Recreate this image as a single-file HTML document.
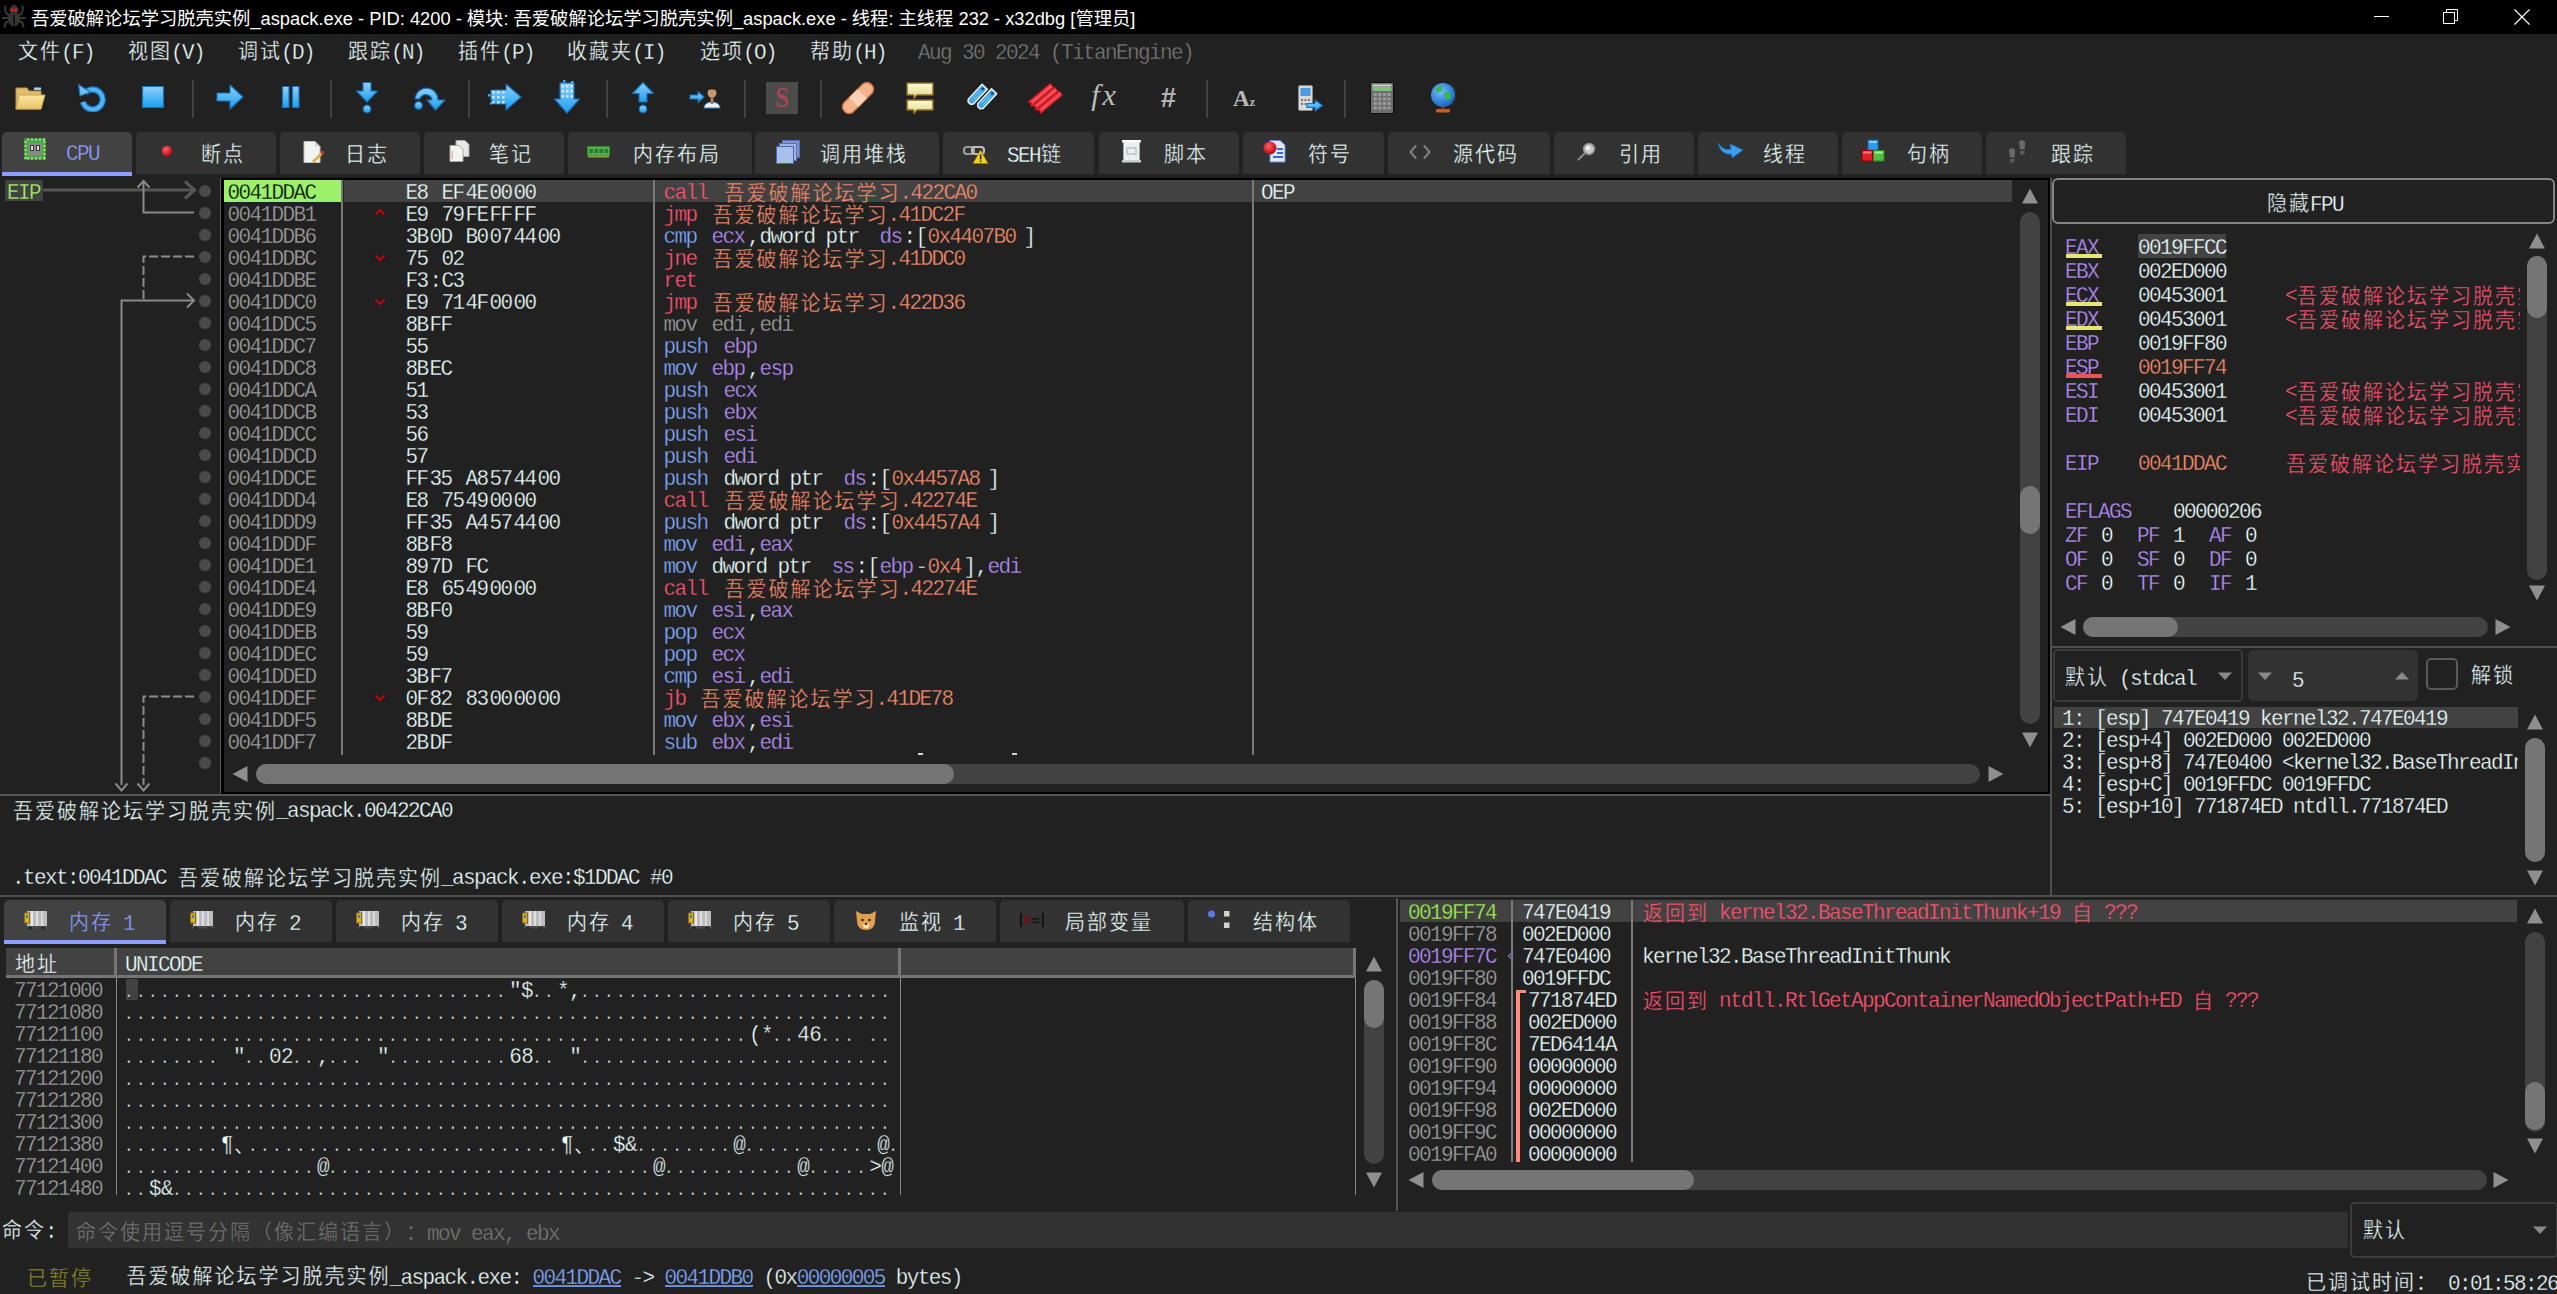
<!DOCTYPE html>
<html lang="zh-CN"><head><meta charset="utf-8"><title>x32dbg</title>
<style>
html,body{margin:0;padding:0;background:#212121;}
body{text-spacing-trim:space-all;width:2557px;height:1294px;position:relative;overflow:hidden;font-family:"Liberation Mono","Noto Sans CJK SC",monospace;font-size:21px;letter-spacing:-1.6px;color:#eeffff;}
body div,body svg{position:absolute;}
.t{white-space:pre;font-size:21px;-webkit-text-stroke:0.3px var(--bg,#212121);paint-order:fill stroke;transform:scaleY(1.045);transform-origin:50% 50%;margin-top:3px;}
.c{font-size:20px;letter-spacing:2px;position:relative;top:0.5px;left:1px;font-family:"Liberation Mono","Noto Sans CJK SC",monospace;}
.u .c{top:-1px;}
.ti{white-space:pre;font-family:"Liberation Sans","Noto Sans CJK SC",sans-serif;font-size:18.3px;letter-spacing:0;transform:none;margin-top:0;}
.ti .c{font-size:18.3px;letter-spacing:0;top:0;left:0;font-family:"Liberation Sans","Noto Sans CJK SC",sans-serif;}
.k{display:inline-block;white-space:pre;vertical-align:top;}
.d{letter-spacing:-0.6px;}
.dd{font-size:16px;letter-spacing:2.4px;position:relative;left:-1px;}
.ic{letter-spacing:0;white-space:pre;text-align:center;}
</style></head>
<body>
<svg width="0" height="0" style="position:absolute"><defs>
<linearGradient id="gb" x1="0" y1="0" x2="0" y2="1"><stop offset="0" stop-color="#8fd0f8"/><stop offset="1" stop-color="#1c9ff0"/></linearGradient>
<linearGradient id="gy" x1="0" y1="0" x2="0" y2="1"><stop offset="0" stop-color="#fbe6a2"/><stop offset="1" stop-color="#e8c46a"/></linearGradient>
<linearGradient id="gc" x1="0" y1="0" x2="0" y2="1"><stop offset="0" stop-color="#fdfbe0"/><stop offset="1" stop-color="#e2d680"/></linearGradient>
<radialGradient id="gg" cx="0.4" cy="0.35" r="0.7"><stop offset="0" stop-color="#6fc0ff"/><stop offset="1" stop-color="#1560c0"/></radialGradient>
<radialGradient id="gr" cx="0.4" cy="0.35" r="0.7"><stop offset="0" stop-color="#ff6060"/><stop offset="1" stop-color="#b00010"/></radialGradient>
</defs></svg>
<div style="left:0px;top:0px;width:2557px;height:34px;background:#000"></div>
<svg style="left:2px;top:3px" width="24" height="26" viewBox="0 0 24 26">
<g stroke="#3a3a3a" stroke-width="2" fill="none" stroke-linecap="round"><path d="M7 12 C3 11 3 6 3.500 3.500 M6 15 H1 M7 18 C3 19 2.500 22 2.500 24 M17 12 C21 11 21 6 20.500 3.500 M18 15 H23 M17 18 C21 19 21.500 22 21.500 24"/></g>
<path d="M12 9 C17 9 18.500 13 18 17 C17.500 21 14 23.500 12 24 C10 23.500 6.500 21 6 17 C5.500 13 7 9 12 9 Z" fill="#363636"/><path d="M12 1.500 C15 3 17 5 16.500 8 C16 10.500 8 10.500 7.500 8 C7 5 9 3 12 1.500 Z" fill="#363636"/>
<rect x="9" y="5.500" width="2.600" height="3" fill="#e01818"/><rect x="12.500" y="5.500" width="2.600" height="3" fill="#e01818"/>
<rect x="11.400" y="12" width="1.200" height="12" fill="#000"/></svg>
<div class="ti" style="left:31px;top:3.5px;height:30px;line-height:30px;color:#fff;"><span class="c">吾爱破解论坛学习脱壳实例</span>_aspack.exe - PID: 4200 - <span class="c">模块</span>: <span class="c">吾爱破解论坛学习脱壳实例</span>_aspack.exe - <span class="c">线程</span>: <span class="c">主线程</span> 232 - x32dbg [<span class="c">管理员</span>]</div>
<div style="left:2374px;top:16px;width:15px;height:1px;background:#fff"></div>
<svg style="left:2443px;top:9px" width="16" height="16" viewBox="0 0 16 16" fill="none" stroke="#fff" stroke-width="1"><rect x="0.5" y="3.5" width="11" height="11" /><path d="M3.500 3.500 V0.500 H14.500 V11.500 H11.500"/></svg>
<svg style="left:2513.500px;top:8.500px" width="16" height="16" viewBox="0 0 16 16" fill="none" stroke="#fff" stroke-width="1.2"><path d="M0.5 0.5 L15.5 15.5 M15.5 0.5 L0.5 15.5"/></svg>
<div class="t u" style="left:17px;top:35.7px;height:30px;line-height:30px;color:#eeffff;"><span class="c">文件</span>(F)</div>
<div class="t u" style="left:127px;top:35.7px;height:30px;line-height:30px;color:#eeffff;"><span class="c">视图</span>(V)</div>
<div class="t u" style="left:237px;top:35.7px;height:30px;line-height:30px;color:#eeffff;"><span class="c">调试</span>(D)</div>
<div class="t u" style="left:347px;top:35.7px;height:30px;line-height:30px;color:#eeffff;"><span class="c">跟踪</span>(N)</div>
<div class="t u" style="left:457px;top:35.7px;height:30px;line-height:30px;color:#eeffff;"><span class="c">插件</span>(P)</div>
<div class="t u" style="left:566px;top:35.7px;height:30px;line-height:30px;color:#eeffff;"><span class="c">收藏夹</span>(I)</div>
<div class="t u" style="left:699px;top:35.7px;height:30px;line-height:30px;color:#eeffff;"><span class="c">选项</span>(O)</div>
<div class="t u" style="left:809px;top:35.7px;height:30px;line-height:30px;color:#eeffff;"><span class="c">帮助</span>(H)</div>
<div class="t u" style="left:918px;top:35.7px;height:30px;line-height:30px;color:#777;">Aug 30 2024 (TitanEngine)</div>
<svg style="left:14px;top:84px" width="34" height="28" viewBox="0 0 34 28"><path d="M2 4 H13 L15 7 H27 V25 H2 Z" fill="#e0bd6a" stroke="#b8934a"/><path d="M5 11 H31 L27 25 H2 Z" fill="url(#gy)" stroke="#c9a555"/><rect x="20" y="3.500" width="7" height="2.500" fill="#9fd4f0"/></svg>
<svg style="left:77px;top:82px" width="30" height="30" viewBox="0 0 30 30"><path d="M8 11 A10 10 0 1 1 6 20" fill="none" stroke="#1b6fb8" stroke-width="6.500"/><path d="M8 11 A10 10 0 1 1 6 20" fill="none" stroke="#4fb4f2" stroke-width="4"/><path d="M1.500 2.500 L3 14 L13.500 10 Z" fill="#6cc0f5" stroke="#1b6fb8" stroke-width="1.200" stroke-linejoin="round"/></svg>
<svg style="left:141px;top:85px" width="24" height="24" viewBox="0 0 24 24"><rect x="1.500" y="1.500" width="21" height="21" fill="url(#gb)" stroke="#1b6fb8" stroke-width="1.2" stroke-linejoin="round"/></svg>
<div style="left:192px;top:80px;width:2px;height:38px;background:#424242"></div>
<svg style="left:215px;top:82px" width="30" height="30" viewBox="0 0 30 30"><path d="M2 11 H15 V3 L28 15 L15 27 V19 H2 Z" fill="url(#gb)" stroke="#1b6fb8" stroke-width="1.2" stroke-linejoin="round"/></svg>
<svg style="left:281px;top:85px" width="20" height="24" viewBox="0 0 20 24"><rect x="1.500" y="1.500" width="6.500" height="21" fill="url(#gb)" stroke="#1b6fb8" stroke-width="1.2" stroke-linejoin="round"/><rect x="11.500" y="1.500" width="6.500" height="21" fill="url(#gb)" stroke="#1b6fb8" stroke-width="1.2" stroke-linejoin="round"/></svg>
<div style="left:330px;top:80px;width:2px;height:38px;background:#424242"></div>
<svg style="left:355px;top:81px" width="24" height="34" viewBox="0 0 24 34"><path d="M8 1.500 H16 V10 H22.500 L12 21 L1.500 10 H8 Z" fill="url(#gb)" stroke="#1b6fb8" stroke-width="1.2" stroke-linejoin="round"/><circle cx="12" cy="28" r="3.800" fill="url(#gb)" stroke="#1b6fb8" stroke-width="1.2" stroke-linejoin="round"/></svg>
<svg style="left:413px;top:84px" width="34" height="28" viewBox="0 0 34 28"><path d="M2 15 C3 5 14 1 21 7 C24 10 25 13 25 16 H32 L22.500 26 L14 16 H19 C18 10 10 8 6.500 15 Z" fill="url(#gb)" stroke="#1b6fb8" stroke-width="1.2" stroke-linejoin="round"/><circle cx="5.500" cy="21.500" r="3.800" fill="url(#gb)" stroke="#1b6fb8" stroke-width="1.2" stroke-linejoin="round"/></svg>
<div style="left:468px;top:80px;width:2px;height:38px;background:#424242"></div>
<svg style="left:488px;top:82px" width="36" height="30" viewBox="0 0 36 30"><path d="M3 8 H18 V2 L33 15 L18 28 V22 H7 L3 18 Z" fill="url(#gb)" stroke="#1b6fb8" stroke-width="1.2" stroke-linejoin="round"/><rect x="4" y="9" width="2.500" height="2.500" fill="#cfeaff"/><rect x="4" y="14" width="2.500" height="2.500" fill="#cfeaff"/><rect x="4" y="19" width="2.500" height="2.500" fill="#cfeaff"/><rect x="9" y="9" width="2.500" height="2.500" fill="#cfeaff"/><rect x="9" y="14" width="2.500" height="2.500" fill="#cfeaff"/><rect x="9" y="19" width="2.500" height="2.500" fill="#cfeaff"/><rect x="14" y="9" width="2.500" height="2.500" fill="#cfeaff"/><rect x="14" y="14" width="2.500" height="2.500" fill="#cfeaff"/><rect x="14" y="19" width="2.500" height="2.500" fill="#cfeaff"/><rect x="0" y="12" width="2.500" height="2.500" fill="#3fa9f0"/><rect x="2" y="20" width="2.500" height="2.500" fill="#3fa9f0"/></svg>
<svg style="left:553px;top:80px" width="28" height="36" viewBox="0 0 28 36"><path d="M7 3 H21 V19 H26.500 L14 33 L1.500 19 H7 Z" fill="url(#gb)" stroke="#1b6fb8" stroke-width="1.2" stroke-linejoin="round"/><rect x="8.5" y="5" width="2.500" height="2.500" fill="#cfeaff"/><rect x="8.5" y="10" width="2.500" height="2.500" fill="#cfeaff"/><rect x="8.5" y="15" width="2.500" height="2.500" fill="#cfeaff"/><rect x="13" y="5" width="2.500" height="2.500" fill="#cfeaff"/><rect x="13" y="10" width="2.500" height="2.500" fill="#cfeaff"/><rect x="13" y="15" width="2.500" height="2.500" fill="#cfeaff"/><rect x="17.5" y="5" width="2.500" height="2.500" fill="#cfeaff"/><rect x="17.5" y="10" width="2.500" height="2.500" fill="#cfeaff"/><rect x="17.5" y="15" width="2.500" height="2.500" fill="#cfeaff"/><rect x="10" y="0" width="2.500" height="2.500" fill="#3fa9f0"/><rect x="18" y="1" width="2.500" height="2.500" fill="#3fa9f0"/></svg>
<div style="left:606px;top:80px;width:2px;height:38px;background:#424242"></div>
<svg style="left:631px;top:81px" width="24" height="34" viewBox="0 0 24 34"><path d="M8 21 H16 V12.500 H22.500 L12 1.500 L1.500 12.500 H8 Z" fill="url(#gb)" stroke="#1b6fb8" stroke-width="1.2" stroke-linejoin="round"/><circle cx="12" cy="28" r="3.800" fill="url(#gb)" stroke="#1b6fb8" stroke-width="1.2" stroke-linejoin="round"/></svg>
<svg style="left:689px;top:86px" width="34" height="24" viewBox="0 0 34 24"><path d="M1 9 H9 V5.500 L15 11 L9 16.500 V13 H1 Z" fill="url(#gb)" stroke="#1b6fb8" stroke-width="1.2" stroke-linejoin="round"/><circle cx="23" cy="7" r="4.500" fill="#c99a72"/><path d="M18 6 A5 5 0 0 1 28 6 L27 3.500 H19 Z" fill="#2a1a10"/><path d="M15 22 C15 14 31 14 31 22 Z" fill="#e8f2fb" stroke="#3b7fc4"/><rect x="21.500" y="11" width="3" height="7" fill="#b07a50"/></svg>
<div style="left:744px;top:80px;width:2px;height:38px;background:#424242"></div>
<div style="left:766px;top:82px;width:32px;height:32px;background:#4b4b4b"></div>
<div class="ic" style="left:766px;top:82px;width:32px;height:32px;line-height:32px;text-align:center;color:#a84656;font:bold 29px/31px 'Liberation Serif',serif;transform:scaleX(0.85)">S</div>
<div style="left:820px;top:80px;width:2px;height:38px;background:#424242"></div>
<svg style="left:841px;top:80px" width="34" height="36" viewBox="0 0 34 36"><g transform="rotate(-45 17 18)"><rect x="-2" y="11.500" width="38" height="13" rx="6" fill="#f3b48e" stroke="#c8743c" stroke-width="1.400"/><rect x="11" y="11.500" width="12" height="13" fill="#f9d2b8"/></g></svg>
<svg style="left:905px;top:81px" width="30" height="34" viewBox="0 0 30 34"><path d="M2 2 H28 V14 H12 L9 17.500 L8.500 14 H2 Z" fill="url(#gc)" stroke="#8a6a1c" stroke-width="1.500" stroke-linejoin="round"/><path d="M2 19 H28 V29 H12 L9 32.500 L8.500 29 H2 Z" fill="url(#gc)" stroke="#8a6a1c" stroke-width="1.500" stroke-linejoin="round"/></svg>
<svg style="left:962px;top:80px" width="40" height="34" viewBox="0 0 40 34"><g transform="translate(15 15) rotate(-47) scale(0.9 0.85)"><path d="M-12.500 -2 L-10 -4.200 H12.500 V4.200 H-10 L-12.500 2 Z" fill="#3ea4ea" stroke="#f2f9ff" stroke-width="1.600" stroke-linejoin="round"/><path d="M-7 -1.500 H6 M-7 1.500 H6" stroke="#8fd0f8" stroke-width="1"/><circle cx="9.300" cy="0" r="1.500" fill="#1a3a5a"/></g><g transform="translate(24.500 19.500) rotate(-47) scale(0.9 0.85)"><path d="M-12.500 -2 L-10 -4.200 H12.500 V4.200 H-10 L-12.500 2 Z" fill="#3ea4ea" stroke="#f2f9ff" stroke-width="1.600" stroke-linejoin="round"/><path d="M-7 -1.500 H6 M-7 1.500 H6" stroke="#8fd0f8" stroke-width="1"/><circle cx="9.300" cy="0" r="1.500" fill="#1a3a5a"/></g></svg>
<svg style="left:1024px;top:78px" width="40" height="36" viewBox="0 0 40 36"><g transform="translate(16.500 17) rotate(-40)"><path d="M-15 -2.800 H15 V2.800 H-15 L-12.500 0 Z" fill="#f0303a" stroke="#9a0a14" stroke-width="0.700"/><path d="M-11 0 H14" stroke="#ff7078" stroke-width="1"/></g><g transform="translate(21 20.800) rotate(-40)"><path d="M-15 -2.800 H15 V2.800 H-15 L-12.500 0 Z" fill="#f0303a" stroke="#9a0a14" stroke-width="0.700"/><path d="M-11 0 H14" stroke="#ff7078" stroke-width="1"/></g><g transform="translate(25.500 24.600) rotate(-40)"><path d="M-15 -2.800 H15 V2.800 H-15 L-12.500 0 Z" fill="#f0303a" stroke="#9a0a14" stroke-width="0.700"/><path d="M-11 0 H14" stroke="#ff7078" stroke-width="1"/></g></svg>
<div class="ic" style="left:1086px;top:76px;width:38px;height:38px;color:#bdbdbd;font:italic 30px/38px 'Liberation Serif',serif;letter-spacing:3px">fx</div>
<div class="ic" style="left:1154px;top:80px;width:28px;height:36px;color:#b4b4b4;font:italic bold 27px/36px 'Liberation Sans',sans-serif;">#</div>
<div style="left:1206px;top:80px;width:2px;height:38px;background:#424242"></div>
<div class="ic" style="left:1229px;top:83.500px;width:30px;height:30px;color:#b8b8b8;font:bold 23px/30px 'Liberation Serif',serif;">A<span style="font-size:12px">z</span></div>
<svg style="left:1297px;top:84px" width="28" height="30" viewBox="0 0 28 30"><rect x="1.500" y="1.500" width="14" height="25" rx="1.500" fill="#d8d8d8" stroke="#8a8a8a"/><rect x="3.500" y="4" width="10" height="8" fill="#4a9be0"/><g fill="#777"><rect x="4" y="15" width="2" height="2"/><rect x="7.500" y="15" width="2" height="2"/><rect x="11" y="15" width="2" height="2"/><rect x="4" y="19" width="2" height="2"/><rect x="7.500" y="19" width="2" height="2"/><rect x="11" y="19" width="2" height="2"/></g><path d="M10 19.500 H18 V16 L25.500 21.500 L18 27 V23.500 H10 Z" fill="url(#gb)" stroke="#1b6fb8" stroke-width="1.2" stroke-linejoin="round"/></svg>
<div style="left:1344px;top:80px;width:2px;height:38px;background:#424242"></div>
<svg style="left:1370px;top:82px" width="24" height="32" viewBox="0 0 24 32"><rect x="0.500" y="0.500" width="23" height="31" fill="#6e6e6e" stroke="#101010"/><rect x="2.500" y="2.500" width="19" height="2" fill="#d0d0d0"/><rect x="2.500" y="5" width="19" height="4" fill="#7fbf7f"/><rect x="3.5" y="11" width="3.200" height="3" fill="#9a9a9a"/><rect x="3.5" y="15.5" width="3.200" height="3" fill="#9a9a9a"/><rect x="3.5" y="20" width="3.200" height="3" fill="#9a9a9a"/><rect x="3.5" y="24.5" width="3.200" height="3" fill="#9a9a9a"/><rect x="8.2" y="11" width="3.200" height="3" fill="#9a9a9a"/><rect x="8.2" y="15.5" width="3.200" height="3" fill="#9a9a9a"/><rect x="8.2" y="20" width="3.200" height="3" fill="#9a9a9a"/><rect x="8.2" y="24.5" width="3.200" height="3" fill="#9a9a9a"/><rect x="12.9" y="11" width="3.200" height="3" fill="#9a9a9a"/><rect x="12.9" y="15.5" width="3.200" height="3" fill="#9a9a9a"/><rect x="12.9" y="20" width="3.200" height="3" fill="#9a9a9a"/><rect x="12.9" y="24.5" width="3.200" height="3" fill="#9a9a9a"/><rect x="17.4" y="11" width="3.200" height="3" fill="#9a9a9a"/><rect x="17.4" y="15.5" width="3.200" height="3" fill="#9a9a9a"/><rect x="17.4" y="20" width="3.200" height="3" fill="#9a9a9a"/><rect x="17.4" y="24.5" width="3.200" height="3" fill="#9a9a9a"/></svg>
<svg style="left:1430px;top:81px" width="28" height="34" viewBox="0 0 28 34"><path d="M20 3 A13 13 0 0 1 20 25" fill="none" stroke="#2a2a2a" stroke-width="2"/><circle cx="13" cy="14" r="12" fill="url(#gg)"/><path d="M6 7 C9 4 13 5 12 9 C11 12 7 12 6 10 Z M14 12 C18 10 22 12 21 16 C20 20 16 19 15 17 Z" fill="#3cb84a"/><rect x="6" y="28" width="14" height="3.500" rx="1" fill="#c85a1e"/><rect x="11.500" y="25.500" width="3" height="3" fill="#8a3a10"/></svg>
<div style="left:2px;top:132px;width:130px;height:44px;background:#424242;border-radius:5px 5px 0 0"></div>
<div style="left:2px;top:172px;width:130px;height:4px;background:#8c9eff"></div>
<svg style="left:24px;top:138px" width="22" height="22" viewBox="0 0 22 22"><rect width="22" height="22" fill="#2f8a38"/><rect x="1" y="1" width="20" height="20" fill="#4aa84a"/><rect x="3" y="0.500" width="2" height="2" fill="#b8d878"/><rect x="3" y="19.500" width="2" height="2" fill="#b8d878"/><rect x="0.500" y="3" width="2" height="2" fill="#b8d878"/><rect x="19.500" y="3" width="2" height="2" fill="#b8d878"/><rect x="7" y="0.500" width="2" height="2" fill="#b8d878"/><rect x="7" y="19.500" width="2" height="2" fill="#b8d878"/><rect x="0.500" y="7" width="2" height="2" fill="#b8d878"/><rect x="19.500" y="7" width="2" height="2" fill="#b8d878"/><rect x="11" y="0.500" width="2" height="2" fill="#b8d878"/><rect x="11" y="19.500" width="2" height="2" fill="#b8d878"/><rect x="0.500" y="11" width="2" height="2" fill="#b8d878"/><rect x="19.500" y="11" width="2" height="2" fill="#b8d878"/><rect x="15" y="0.500" width="2" height="2" fill="#b8d878"/><rect x="15" y="19.500" width="2" height="2" fill="#b8d878"/><rect x="0.500" y="15" width="2" height="2" fill="#b8d878"/><rect x="19.500" y="15" width="2" height="2" fill="#b8d878"/><rect x="19" y="0.500" width="2" height="2" fill="#b8d878"/><rect x="19" y="19.500" width="2" height="2" fill="#b8d878"/><rect x="0.500" y="19" width="2" height="2" fill="#b8d878"/><rect x="19.500" y="19" width="2" height="2" fill="#b8d878"/><rect x="4.500" y="5" width="13" height="12" fill="#8a8a8a"/><rect x="6" y="7" width="4" height="6" fill="#3a3a3a"/><rect x="12" y="7" width="4" height="6" fill="#3a3a3a"/><rect x="7" y="8" width="2" height="4" fill="#ddd"/><rect x="13" y="8" width="2" height="4" fill="#ddd"/></svg>
<div class="t u" style="left:66px;top:137px;height:30px;line-height:30px;color:#8c9eff;--bg:#424242;">CPU</div>
<div style="left:136px;top:132px;width:140px;height:42px;background:#323232;border-radius:5px 5px 0 0"></div>
<svg style="left:161px;top:145px" width="12" height="12" viewBox="0 0 12 12"><circle cx="6" cy="6" r="5.300" fill="url(#gr)"/></svg>
<div class="t u" style="left:200px;top:138.5px;height:30px;line-height:30px;color:#eeffff;--bg:#323232;"><span class="c">断点</span></div>
<div style="left:280px;top:132px;width:140px;height:42px;background:#323232;border-radius:5px 5px 0 0"></div>
<svg style="left:303px;top:141px" width="22" height="22" viewBox="0 0 22 22"><path d="M1 0.500 H12 L17 5.500 V21.500 H1 Z" fill="#f2f2f2" stroke="#bdbdbd"/><path d="M12 0.500 V5.500 H17 Z" fill="#cfcfcf"/><path d="M9 20 L18 11 L20 13 L11 22 Z" fill="#d8b44a"/><rect x="18" y="10" width="3" height="3" fill="#d03030"/></svg>
<div class="t u" style="left:344px;top:138.5px;height:30px;line-height:30px;color:#eeffff;--bg:#323232;"><span class="c">日志</span></div>
<div style="left:424px;top:132px;width:140px;height:42px;background:#323232;border-radius:5px 5px 0 0"></div>
<svg style="left:449px;top:140px" width="22" height="22" viewBox="0 0 22 22"><path d="M7 0.500 H16 L20 4.500 V16.500 H7 Z" fill="#e8e8e8" stroke="#a8a8a8"/><path d="M1 5.500 H10 L14 9.500 V21.500 H1 Z" fill="#f4f4f4" stroke="#a8a8a8"/><rect x="2.500" y="11" width="1.500" height="8" fill="#f0b0b0"/></svg>
<div class="t u" style="left:488px;top:138.5px;height:30px;line-height:30px;color:#eeffff;--bg:#323232;"><span class="c">笔记</span></div>
<div style="left:568px;top:132px;width:184px;height:42px;background:#323232;border-radius:5px 5px 0 0"></div>
<svg style="left:587px;top:146px" width="23" height="12" viewBox="0 0 23 12"><rect x="0.500" y="0.500" width="22" height="9" fill="#4fb04f" stroke="#2f8a2f"/><rect x="2.5" y="3" width="3.500" height="4" fill="#2a7a2a"/><rect x="7.5" y="3" width="3.500" height="4" fill="#2a7a2a"/><rect x="12.5" y="3" width="3.500" height="4" fill="#2a7a2a"/><rect x="17.5" y="3" width="3.500" height="4" fill="#2a7a2a"/><rect x="1" y="9.500" width="21" height="2" fill="#8aa040"/></svg>
<div class="t u" style="left:632px;top:138.5px;height:30px;line-height:30px;color:#eeffff;--bg:#323232;"><span class="c">内存布局</span></div>
<div style="left:755px;top:132px;width:184px;height:42px;background:#323232;border-radius:5px 5px 0 0"></div>
<svg style="left:776px;top:140px" width="24" height="24" viewBox="0 0 24 24"><rect x="6.500" y="0.500" width="17" height="17" fill="#7f97c8" stroke="#5a74b0"/><rect x="3.500" y="3.500" width="17" height="17" fill="#9fb4de" stroke="#5a74b0"/><rect x="0.500" y="6.500" width="17" height="17" fill="#a9c0ea" stroke="#4a64c8"/></svg>
<div class="t u" style="left:819px;top:138.5px;height:30px;line-height:30px;color:#eeffff;--bg:#323232;"><span class="c">调用堆栈</span></div>
<div style="left:943px;top:132px;width:151px;height:42px;background:#323232;border-radius:5px 5px 0 0"></div>
<svg style="left:963px;top:145px" width="26" height="20" viewBox="0 0 26 20"><rect x="1" y="2" width="10" height="7" rx="3" fill="none" stroke="#9a9a9a" stroke-width="2.200"/><rect x="9" y="2" width="12" height="7" rx="3" fill="none" stroke="#bdbdbd" stroke-width="2.200"/><path d="M17.500 5 L25 18.500 H10 Z" fill="#f4d21e" stroke="#9a7a00" stroke-width="0.800"/><rect x="16.800" y="9.500" width="1.600" height="5" fill="#222"/><rect x="16.800" y="15.500" width="1.600" height="1.600" fill="#222"/></svg>
<div class="t u" style="left:1007px;top:138.5px;height:30px;line-height:30px;color:#eeffff;--bg:#323232;">SEH<span class="c">链</span></div>
<div style="left:1099px;top:132px;width:140px;height:42px;background:#323232;border-radius:5px 5px 0 0"></div>
<svg style="left:1122px;top:140px" width="20" height="23" viewBox="0 0 20 23"><rect x="1.500" y="0.500" width="16" height="21" fill="#e9efef" stroke="#9aa"/><rect x="0" y="0" width="19" height="2.500" fill="#fff"/><rect x="0" y="20" width="19" height="2.500" fill="#c8d0d0"/><rect x="5" y="8" width="9" height="6" fill="none" stroke="#a8b0b0"/></svg>
<div class="t u" style="left:1163px;top:138.5px;height:30px;line-height:30px;color:#eeffff;--bg:#323232;"><span class="c">脚本</span></div>
<div style="left:1243px;top:132px;width:141px;height:42px;background:#323232;border-radius:5px 5px 0 0"></div>
<svg style="left:1263px;top:140px" width="24" height="23" viewBox="0 0 24 23"><path d="M7 0.500 H17 L22 5 V22 H7 Z" fill="#dfe9fb" stroke="#6a8ad8"/><rect x="14" y="8" width="6" height="2" fill="#3a6ad8"/><rect x="14" y="12" width="6" height="2" fill="#3a6ad8"/><rect x="10" y="16" width="10" height="2" fill="#3a6ad8"/><circle cx="7" cy="8" r="6.500" fill="url(#gr)"/></svg>
<div class="t u" style="left:1307px;top:138.5px;height:30px;line-height:30px;color:#eeffff;--bg:#323232;"><span class="c">符号</span></div>
<div style="left:1388px;top:132px;width:162px;height:42px;background:#323232;border-radius:5px 5px 0 0"></div>
<svg style="left:1409px;top:144px" width="22" height="16" viewBox="0 0 22 16"><path d="M7 1.500 L1.500 8 L7 14.500 M15 1.500 L20.500 8 L15 14.500" fill="none" stroke="#7a7a7a" stroke-width="2.400"/></svg>
<div class="t u" style="left:1452px;top:138.5px;height:30px;line-height:30px;color:#eeffff;--bg:#323232;"><span class="c">源代码</span></div>
<div style="left:1554px;top:132px;width:140px;height:42px;background:#323232;border-radius:5px 5px 0 0"></div>
<svg style="left:1577px;top:142px" width="20" height="20" viewBox="0 0 20 20"><circle cx="12" cy="7" r="5.500" fill="#c8c8c8" stroke="#8a8a8a" stroke-width="1.500"/><circle cx="11" cy="6" r="2" fill="#f4f4f4"/><path d="M8 11 L1.500 17.500" stroke="#8a8a8a" stroke-width="2.200" stroke-linecap="round"/></svg>
<div class="t u" style="left:1618px;top:138.5px;height:30px;line-height:30px;color:#eeffff;--bg:#323232;"><span class="c">引用</span></div>
<div style="left:1698px;top:132px;width:140px;height:42px;background:#323232;border-radius:5px 5px 0 0"></div>
<svg style="left:1717px;top:141px" width="27" height="18" viewBox="0 0 27 18"><path d="M1 2 C6 9 10 9 14 8 L13 3 L26 9 L15 17 L14.500 13 C8 14 3 10 1 2 Z" fill="#3b9ef0" stroke="#1b6fb8" stroke-width="0.800"/></svg>
<div class="t u" style="left:1762px;top:138.5px;height:30px;line-height:30px;color:#eeffff;--bg:#323232;"><span class="c">线程</span></div>
<div style="left:1842px;top:132px;width:140px;height:42px;background:#323232;border-radius:5px 5px 0 0"></div>
<svg style="left:1861px;top:139px" width="25" height="23" viewBox="0 0 25 23"><rect x="7" y="1" width="10" height="10" fill="#2f9be8" stroke="#1868b0"/><rect x="1" y="11.500" width="10.500" height="10.500" fill="#e02028" stroke="#900"/><rect x="12.500" y="11.500" width="10.500" height="10.500" fill="#4fc040" stroke="#2a8a20"/><rect x="8" y="2" width="8" height="2" fill="#8fd0ff"/><rect x="2" y="12.500" width="8.500" height="2" fill="#ff8080"/><rect x="13.500" y="12.500" width="8.500" height="2" fill="#a8f090"/></svg>
<div class="t u" style="left:1906px;top:138.5px;height:30px;line-height:30px;color:#eeffff;--bg:#323232;"><span class="c">句柄</span></div>
<div style="left:1986px;top:132px;width:140px;height:42px;background:#323232;border-radius:5px 5px 0 0"></div>
<svg style="left:2007px;top:139px" width="22" height="24" viewBox="0 0 22 24"><path d="M12 3 C14 0 19 1 18 6 L17.500 11 L13 10 Z" fill="#6a6a6a"/><rect x="13" y="12" width="4.500" height="3.500" fill="#5a5a5a"/><path d="M2 11 C4 8 9 9 8 14 L7.500 19 L3 18 Z" fill="#6a6a6a"/><rect x="3" y="20" width="4.500" height="3.500" fill="#5a5a5a"/></svg>
<div class="t u" style="left:2050px;top:138.5px;height:30px;line-height:30px;color:#eeffff;--bg:#323232;"><span class="c">跟踪</span></div>
<div style="left:5px;top:180px;width:38px;height:21px;background:#424242"></div>
<div class="t" style="left:7px;top:180px;height:22px;line-height:22px;color:#a5f26e;--bg:#424242;">EIP</div>
<svg style="left:0;top:176px" width="221" height="620" viewBox="0 176 221 620" fill="none"><path d="M43 190 H194" stroke="#565656" stroke-width="3.200"/><path d="M185 181.500 L194.500 190 L185 198.500" stroke="#565656" stroke-width="3.200"/><path d="M194 212.500 H143.500 V182" stroke="#8a8a8a" stroke-width="2"/><path d="M137.500 187.500 L143.500 181 L149.500 187.500" stroke="#8a8a8a" stroke-width="2"/><path d="M194 256.500 H143.500 V300" stroke="#8a8a8a" stroke-width="2" stroke-dasharray="9 3"/><path d="M121.500 785 V300.500 H193" stroke="#8a8a8a" stroke-width="2"/><path d="M187 293.500 L194 300.500 L187 307.500" stroke="#8a8a8a" stroke-width="2"/><path d="M115.500 783.500 L121.500 790.500 L127.500 783.500" stroke="#8a8a8a" stroke-width="2"/><path d="M194 696.500 H143.500 V785" stroke="#8a8a8a" stroke-width="2" stroke-dasharray="9 3"/><path d="M137.500 783.500 L143.500 790.500 L149.500 783.500" stroke="#8a8a8a" stroke-width="2"/><circle cx="205" cy="191" r="6" fill="#4a4a4a"/><circle cx="205" cy="213" r="6" fill="#4a4a4a"/><circle cx="205" cy="235" r="6" fill="#4a4a4a"/><circle cx="205" cy="257" r="6" fill="#4a4a4a"/><circle cx="205" cy="279" r="6" fill="#4a4a4a"/><circle cx="205" cy="301" r="6" fill="#4a4a4a"/><circle cx="205" cy="323" r="6" fill="#4a4a4a"/><circle cx="205" cy="345" r="6" fill="#4a4a4a"/><circle cx="205" cy="367" r="6" fill="#4a4a4a"/><circle cx="205" cy="389" r="6" fill="#4a4a4a"/><circle cx="205" cy="411" r="6" fill="#4a4a4a"/><circle cx="205" cy="433" r="6" fill="#4a4a4a"/><circle cx="205" cy="455" r="6" fill="#4a4a4a"/><circle cx="205" cy="477" r="6" fill="#4a4a4a"/><circle cx="205" cy="499" r="6" fill="#4a4a4a"/><circle cx="205" cy="521" r="6" fill="#4a4a4a"/><circle cx="205" cy="543" r="6" fill="#4a4a4a"/><circle cx="205" cy="565" r="6" fill="#4a4a4a"/><circle cx="205" cy="587" r="6" fill="#4a4a4a"/><circle cx="205" cy="609" r="6" fill="#4a4a4a"/><circle cx="205" cy="631" r="6" fill="#4a4a4a"/><circle cx="205" cy="653" r="6" fill="#4a4a4a"/><circle cx="205" cy="675" r="6" fill="#4a4a4a"/><circle cx="205" cy="697" r="6" fill="#4a4a4a"/><circle cx="205" cy="719" r="6" fill="#4a4a4a"/><circle cx="205" cy="741" r="6" fill="#4a4a4a"/><circle cx="205" cy="763" r="6" fill="#4a4a4a"/></svg>
<div style="left:220px;top:178px;width:1px;height:616px;background:#5a5a5a"></div>
<div style="left:221px;top:178px;width:1829px;height:615.8px;background:#000"></div>
<div style="left:224px;top:180px;width:1824px;height:611.6px;background:#212121"></div>
<div style="left:344px;top:180px;width:1668px;height:22px;background:#424242"></div>
<div style="left:224px;top:180px;width:117px;height:22px;background:#9cf06a"></div>
<div style="left:341px;top:180px;width:2px;height:575px;background:#7a7a7a"></div>
<div style="left:653px;top:180px;width:2px;height:575px;background:#7a7a7a"></div>
<div style="left:1252px;top:180px;width:2px;height:575px;background:#7a7a7a"></div>
<div class="t" style="left:227.5px;top:180px;height:22px;line-height:22px;color:#000;--bg:#9cf06a;">0041DDAC</div>
<div class="t" style="left:405.5px;top:180px;height:22px;line-height:22px;color:#eeffff;--bg:#424242;"><span class="k" style="width:24px">E8</span><span class="k" style="width:12px">&nbsp;</span><span class="k" style="width:24px">EF</span><span class="k" style="width:24px">4E</span><span class="k" style="width:24px">00</span><span class="k" style="width:24px">00</span></div>
<div class="t" style="left:663.5px;top:180px;height:22px;line-height:22px;--bg:#424242;"><span class="k" style="width:60px;color:#ff5370">call </span><span class="k" style="width:276px;color:#f78c6c"><span class="c">吾爱破解论坛学习</span>.422CA0</span></div>
<div class="t" style="left:227.5px;top:202px;height:22px;line-height:22px;color:#a0a0a0;">0041DDB1</div>
<svg style="left:373.5px;top:208px" width="12" height="8" viewBox="0 0 12 8"><path d="M1.500 6.500 L6 2 L10.500 6.500" fill="none" stroke="#c4000c" stroke-width="2"/></svg>
<div class="t" style="left:405.5px;top:202px;height:22px;line-height:22px;color:#eeffff;"><span class="k" style="width:24px">E9</span><span class="k" style="width:12px">&nbsp;</span><span class="k" style="width:24px">79</span><span class="k" style="width:24px">FE</span><span class="k" style="width:24px">FF</span><span class="k" style="width:24px">FF</span></div>
<div class="t" style="left:663.5px;top:202px;height:22px;line-height:22px;"><span class="k" style="width:48px;color:#ff5370">jmp </span><span class="k" style="width:276px;color:#f78c6c"><span class="c">吾爱破解论坛学习</span>.41DC2F</span></div>
<div class="t" style="left:227.5px;top:224px;height:22px;line-height:22px;color:#a0a0a0;">0041DDB6</div>
<div class="t" style="left:405.5px;top:224px;height:22px;line-height:22px;color:#eeffff;"><span class="k" style="width:24px">3B</span><span class="k" style="width:24px">0D</span><span class="k" style="width:12px">&nbsp;</span><span class="k" style="width:24px">B0</span><span class="k" style="width:24px">07</span><span class="k" style="width:24px">44</span><span class="k" style="width:24px">00</span></div>
<div class="t" style="left:663.5px;top:224px;height:22px;line-height:22px;"><span class="k" style="width:48px;color:#82aaff">cmp </span><span class="k" style="width:36px;color:#b58ef6">ecx</span><span class="k" style="width:12px;color:#eeffff">,</span><span class="k" style="width:120px;color:#eeffff">dword ptr </span><span class="k" style="width:24px;color:#b58ef6">ds</span><span class="k" style="width:12px;color:#eeffff">:</span><span class="k" style="width:12px;color:#eeffff">[</span><span class="k" style="width:96px;color:#f78c6c">0x4407B0</span><span class="k" style="width:12px;color:#eeffff">]</span></div>
<div class="t" style="left:227.5px;top:246px;height:22px;line-height:22px;color:#a0a0a0;">0041DDBC</div>
<svg style="left:373.5px;top:254px" width="12" height="8" viewBox="0 0 12 8"><path d="M1.500 1.500 L6 6 L10.500 1.500" fill="none" stroke="#c4000c" stroke-width="2"/></svg>
<div class="t" style="left:405.5px;top:246px;height:22px;line-height:22px;color:#eeffff;"><span class="k" style="width:24px">75</span><span class="k" style="width:12px">&nbsp;</span><span class="k" style="width:24px">02</span></div>
<div class="t" style="left:663.5px;top:246px;height:22px;line-height:22px;"><span class="k" style="width:48px;color:#ff5370">jne </span><span class="k" style="width:276px;color:#f78c6c"><span class="c">吾爱破解论坛学习</span>.41DDC0</span></div>
<div class="t" style="left:227.5px;top:268px;height:22px;line-height:22px;color:#a0a0a0;">0041DDBE</div>
<div class="t" style="left:405.5px;top:268px;height:22px;line-height:22px;color:#eeffff;"><span class="k" style="width:24px">F3</span><span class="k" style="width:12px">:</span><span class="k" style="width:24px">C3</span></div>
<div class="t" style="left:663.5px;top:268px;height:22px;line-height:22px;"><span class="k" style="width:36px;color:#ff5370">ret</span></div>
<div class="t" style="left:227.5px;top:290px;height:22px;line-height:22px;color:#a0a0a0;">0041DDC0</div>
<svg style="left:373.5px;top:298px" width="12" height="8" viewBox="0 0 12 8"><path d="M1.500 1.500 L6 6 L10.500 1.500" fill="none" stroke="#c4000c" stroke-width="2"/></svg>
<div class="t" style="left:405.5px;top:290px;height:22px;line-height:22px;color:#eeffff;"><span class="k" style="width:24px">E9</span><span class="k" style="width:12px">&nbsp;</span><span class="k" style="width:24px">71</span><span class="k" style="width:24px">4F</span><span class="k" style="width:24px">00</span><span class="k" style="width:24px">00</span></div>
<div class="t" style="left:663.5px;top:290px;height:22px;line-height:22px;"><span class="k" style="width:48px;color:#ff5370">jmp </span><span class="k" style="width:276px;color:#f78c6c"><span class="c">吾爱破解论坛学习</span>.422D36</span></div>
<div class="t" style="left:227.5px;top:312px;height:22px;line-height:22px;color:#a0a0a0;">0041DDC5</div>
<div class="t" style="left:405.5px;top:312px;height:22px;line-height:22px;color:#eeffff;"><span class="k" style="width:24px">8B</span><span class="k" style="width:24px">FF</span></div>
<div class="t" style="left:663.5px;top:312px;height:22px;line-height:22px;"><span class="k" style="width:48px;color:#9e9e9e">mov </span><span class="k" style="width:36px;color:#9e9e9e">edi</span><span class="k" style="width:12px;color:#9e9e9e">,</span><span class="k" style="width:36px;color:#9e9e9e">edi</span></div>
<div class="t" style="left:227.5px;top:334px;height:22px;line-height:22px;color:#a0a0a0;">0041DDC7</div>
<div class="t" style="left:405.5px;top:334px;height:22px;line-height:22px;color:#eeffff;"><span class="k" style="width:24px">55</span></div>
<div class="t" style="left:663.5px;top:334px;height:22px;line-height:22px;"><span class="k" style="width:60px;color:#82aaff">push </span><span class="k" style="width:36px;color:#b58ef6">ebp</span></div>
<div class="t" style="left:227.5px;top:356px;height:22px;line-height:22px;color:#a0a0a0;">0041DDC8</div>
<div class="t" style="left:405.5px;top:356px;height:22px;line-height:22px;color:#eeffff;"><span class="k" style="width:24px">8B</span><span class="k" style="width:24px">EC</span></div>
<div class="t" style="left:663.5px;top:356px;height:22px;line-height:22px;"><span class="k" style="width:48px;color:#82aaff">mov </span><span class="k" style="width:36px;color:#b58ef6">ebp</span><span class="k" style="width:12px;color:#eeffff">,</span><span class="k" style="width:36px;color:#b58ef6">esp</span></div>
<div class="t" style="left:227.5px;top:378px;height:22px;line-height:22px;color:#a0a0a0;">0041DDCA</div>
<div class="t" style="left:405.5px;top:378px;height:22px;line-height:22px;color:#eeffff;"><span class="k" style="width:24px">51</span></div>
<div class="t" style="left:663.5px;top:378px;height:22px;line-height:22px;"><span class="k" style="width:60px;color:#82aaff">push </span><span class="k" style="width:36px;color:#b58ef6">ecx</span></div>
<div class="t" style="left:227.5px;top:400px;height:22px;line-height:22px;color:#a0a0a0;">0041DDCB</div>
<div class="t" style="left:405.5px;top:400px;height:22px;line-height:22px;color:#eeffff;"><span class="k" style="width:24px">53</span></div>
<div class="t" style="left:663.5px;top:400px;height:22px;line-height:22px;"><span class="k" style="width:60px;color:#82aaff">push </span><span class="k" style="width:36px;color:#b58ef6">ebx</span></div>
<div class="t" style="left:227.5px;top:422px;height:22px;line-height:22px;color:#a0a0a0;">0041DDCC</div>
<div class="t" style="left:405.5px;top:422px;height:22px;line-height:22px;color:#eeffff;"><span class="k" style="width:24px">56</span></div>
<div class="t" style="left:663.5px;top:422px;height:22px;line-height:22px;"><span class="k" style="width:60px;color:#82aaff">push </span><span class="k" style="width:36px;color:#b58ef6">esi</span></div>
<div class="t" style="left:227.5px;top:444px;height:22px;line-height:22px;color:#a0a0a0;">0041DDCD</div>
<div class="t" style="left:405.5px;top:444px;height:22px;line-height:22px;color:#eeffff;"><span class="k" style="width:24px">57</span></div>
<div class="t" style="left:663.5px;top:444px;height:22px;line-height:22px;"><span class="k" style="width:60px;color:#82aaff">push </span><span class="k" style="width:36px;color:#b58ef6">edi</span></div>
<div class="t" style="left:227.5px;top:466px;height:22px;line-height:22px;color:#a0a0a0;">0041DDCE</div>
<div class="t" style="left:405.5px;top:466px;height:22px;line-height:22px;color:#eeffff;"><span class="k" style="width:24px">FF</span><span class="k" style="width:24px">35</span><span class="k" style="width:12px">&nbsp;</span><span class="k" style="width:24px">A8</span><span class="k" style="width:24px">57</span><span class="k" style="width:24px">44</span><span class="k" style="width:24px">00</span></div>
<div class="t" style="left:663.5px;top:466px;height:22px;line-height:22px;"><span class="k" style="width:60px;color:#82aaff">push </span><span class="k" style="width:120px;color:#eeffff">dword ptr </span><span class="k" style="width:24px;color:#b58ef6">ds</span><span class="k" style="width:12px;color:#eeffff">:</span><span class="k" style="width:12px;color:#eeffff">[</span><span class="k" style="width:96px;color:#f78c6c">0x4457A8</span><span class="k" style="width:12px;color:#eeffff">]</span></div>
<div class="t" style="left:227.5px;top:488px;height:22px;line-height:22px;color:#a0a0a0;">0041DDD4</div>
<div class="t" style="left:405.5px;top:488px;height:22px;line-height:22px;color:#eeffff;"><span class="k" style="width:24px">E8</span><span class="k" style="width:12px">&nbsp;</span><span class="k" style="width:24px">75</span><span class="k" style="width:24px">49</span><span class="k" style="width:24px">00</span><span class="k" style="width:24px">00</span></div>
<div class="t" style="left:663.5px;top:488px;height:22px;line-height:22px;"><span class="k" style="width:60px;color:#ff5370">call </span><span class="k" style="width:276px;color:#f78c6c"><span class="c">吾爱破解论坛学习</span>.42274E</span></div>
<div class="t" style="left:227.5px;top:510px;height:22px;line-height:22px;color:#a0a0a0;">0041DDD9</div>
<div class="t" style="left:405.5px;top:510px;height:22px;line-height:22px;color:#eeffff;"><span class="k" style="width:24px">FF</span><span class="k" style="width:24px">35</span><span class="k" style="width:12px">&nbsp;</span><span class="k" style="width:24px">A4</span><span class="k" style="width:24px">57</span><span class="k" style="width:24px">44</span><span class="k" style="width:24px">00</span></div>
<div class="t" style="left:663.5px;top:510px;height:22px;line-height:22px;"><span class="k" style="width:60px;color:#82aaff">push </span><span class="k" style="width:120px;color:#eeffff">dword ptr </span><span class="k" style="width:24px;color:#b58ef6">ds</span><span class="k" style="width:12px;color:#eeffff">:</span><span class="k" style="width:12px;color:#eeffff">[</span><span class="k" style="width:96px;color:#f78c6c">0x4457A4</span><span class="k" style="width:12px;color:#eeffff">]</span></div>
<div class="t" style="left:227.5px;top:532px;height:22px;line-height:22px;color:#a0a0a0;">0041DDDF</div>
<div class="t" style="left:405.5px;top:532px;height:22px;line-height:22px;color:#eeffff;"><span class="k" style="width:24px">8B</span><span class="k" style="width:24px">F8</span></div>
<div class="t" style="left:663.5px;top:532px;height:22px;line-height:22px;"><span class="k" style="width:48px;color:#82aaff">mov </span><span class="k" style="width:36px;color:#b58ef6">edi</span><span class="k" style="width:12px;color:#eeffff">,</span><span class="k" style="width:36px;color:#b58ef6">eax</span></div>
<div class="t" style="left:227.5px;top:554px;height:22px;line-height:22px;color:#a0a0a0;">0041DDE1</div>
<div class="t" style="left:405.5px;top:554px;height:22px;line-height:22px;color:#eeffff;"><span class="k" style="width:24px">89</span><span class="k" style="width:24px">7D</span><span class="k" style="width:12px">&nbsp;</span><span class="k" style="width:24px">FC</span></div>
<div class="t" style="left:663.5px;top:554px;height:22px;line-height:22px;"><span class="k" style="width:48px;color:#82aaff">mov </span><span class="k" style="width:120px;color:#eeffff">dword ptr </span><span class="k" style="width:24px;color:#b58ef6">ss</span><span class="k" style="width:12px;color:#eeffff">:</span><span class="k" style="width:12px;color:#eeffff">[</span><span class="k" style="width:36px;color:#b58ef6">ebp</span><span class="k" style="width:12px;color:#eeffff">-</span><span class="k" style="width:36px;color:#f78c6c">0x4</span><span class="k" style="width:12px;color:#eeffff">]</span><span class="k" style="width:12px;color:#eeffff">,</span><span class="k" style="width:36px;color:#b58ef6">edi</span></div>
<div class="t" style="left:227.5px;top:576px;height:22px;line-height:22px;color:#a0a0a0;">0041DDE4</div>
<div class="t" style="left:405.5px;top:576px;height:22px;line-height:22px;color:#eeffff;"><span class="k" style="width:24px">E8</span><span class="k" style="width:12px">&nbsp;</span><span class="k" style="width:24px">65</span><span class="k" style="width:24px">49</span><span class="k" style="width:24px">00</span><span class="k" style="width:24px">00</span></div>
<div class="t" style="left:663.5px;top:576px;height:22px;line-height:22px;"><span class="k" style="width:60px;color:#ff5370">call </span><span class="k" style="width:276px;color:#f78c6c"><span class="c">吾爱破解论坛学习</span>.42274E</span></div>
<div class="t" style="left:227.5px;top:598px;height:22px;line-height:22px;color:#a0a0a0;">0041DDE9</div>
<div class="t" style="left:405.5px;top:598px;height:22px;line-height:22px;color:#eeffff;"><span class="k" style="width:24px">8B</span><span class="k" style="width:24px">F0</span></div>
<div class="t" style="left:663.5px;top:598px;height:22px;line-height:22px;"><span class="k" style="width:48px;color:#82aaff">mov </span><span class="k" style="width:36px;color:#b58ef6">esi</span><span class="k" style="width:12px;color:#eeffff">,</span><span class="k" style="width:36px;color:#b58ef6">eax</span></div>
<div class="t" style="left:227.5px;top:620px;height:22px;line-height:22px;color:#a0a0a0;">0041DDEB</div>
<div class="t" style="left:405.5px;top:620px;height:22px;line-height:22px;color:#eeffff;"><span class="k" style="width:24px">59</span></div>
<div class="t" style="left:663.5px;top:620px;height:22px;line-height:22px;"><span class="k" style="width:48px;color:#82aaff">pop </span><span class="k" style="width:36px;color:#b58ef6">ecx</span></div>
<div class="t" style="left:227.5px;top:642px;height:22px;line-height:22px;color:#a0a0a0;">0041DDEC</div>
<div class="t" style="left:405.5px;top:642px;height:22px;line-height:22px;color:#eeffff;"><span class="k" style="width:24px">59</span></div>
<div class="t" style="left:663.5px;top:642px;height:22px;line-height:22px;"><span class="k" style="width:48px;color:#82aaff">pop </span><span class="k" style="width:36px;color:#b58ef6">ecx</span></div>
<div class="t" style="left:227.5px;top:664px;height:22px;line-height:22px;color:#a0a0a0;">0041DDED</div>
<div class="t" style="left:405.5px;top:664px;height:22px;line-height:22px;color:#eeffff;"><span class="k" style="width:24px">3B</span><span class="k" style="width:24px">F7</span></div>
<div class="t" style="left:663.5px;top:664px;height:22px;line-height:22px;"><span class="k" style="width:48px;color:#82aaff">cmp </span><span class="k" style="width:36px;color:#b58ef6">esi</span><span class="k" style="width:12px;color:#eeffff">,</span><span class="k" style="width:36px;color:#b58ef6">edi</span></div>
<div class="t" style="left:227.5px;top:686px;height:22px;line-height:22px;color:#a0a0a0;">0041DDEF</div>
<svg style="left:373.5px;top:694px" width="12" height="8" viewBox="0 0 12 8"><path d="M1.500 1.500 L6 6 L10.500 1.500" fill="none" stroke="#c4000c" stroke-width="2"/></svg>
<div class="t" style="left:405.5px;top:686px;height:22px;line-height:22px;color:#eeffff;"><span class="k" style="width:24px">0F</span><span class="k" style="width:24px">82</span><span class="k" style="width:12px">&nbsp;</span><span class="k" style="width:24px">83</span><span class="k" style="width:24px">00</span><span class="k" style="width:24px">00</span><span class="k" style="width:24px">00</span></div>
<div class="t" style="left:663.5px;top:686px;height:22px;line-height:22px;"><span class="k" style="width:36px;color:#ff5370">jb </span><span class="k" style="width:276px;color:#f78c6c"><span class="c">吾爱破解论坛学习</span>.41DE78</span></div>
<div class="t" style="left:227.5px;top:708px;height:22px;line-height:22px;color:#a0a0a0;">0041DDF5</div>
<div class="t" style="left:405.5px;top:708px;height:22px;line-height:22px;color:#eeffff;"><span class="k" style="width:24px">8B</span><span class="k" style="width:24px">DE</span></div>
<div class="t" style="left:663.5px;top:708px;height:22px;line-height:22px;"><span class="k" style="width:48px;color:#82aaff">mov </span><span class="k" style="width:36px;color:#b58ef6">ebx</span><span class="k" style="width:12px;color:#eeffff">,</span><span class="k" style="width:36px;color:#b58ef6">esi</span></div>
<div class="t" style="left:227.5px;top:730px;height:22px;line-height:22px;color:#a0a0a0;">0041DDF7</div>
<div class="t" style="left:405.5px;top:730px;height:22px;line-height:22px;color:#eeffff;"><span class="k" style="width:24px">2B</span><span class="k" style="width:24px">DF</span></div>
<div class="t" style="left:663.5px;top:730px;height:22px;line-height:22px;"><span class="k" style="width:48px;color:#82aaff">sub </span><span class="k" style="width:36px;color:#b58ef6">ebx</span><span class="k" style="width:12px;color:#eeffff">,</span><span class="k" style="width:36px;color:#b58ef6">edi</span></div>
<div class="t" style="left:1261px;top:180px;height:22px;line-height:22px;color:#eeffff;--bg:#424242;">OEP</div>
<div style="left:918px;top:753px;width:6px;height:2px;background:#cfd8d8;width:5px"></div>
<div style="left:1012px;top:753px;width:6px;height:2px;background:#cfd8d8;width:5px"></div>
<svg style="left:2021px;top:187px" width="18" height="18" viewBox="2021 187 18 18"><polygon points="2022,203.5 2038,203.5 2030,188.5" fill="#8f8f8f"/></svg>
<div style="left:2020px;top:212px;width:20px;height:512px;background:#424242;border-radius:10px"></div>
<div style="left:2020px;top:486px;width:20px;height:48px;background:#757575;border-radius:10px"></div>
<svg style="left:2021px;top:731px" width="18" height="18" viewBox="2021 731 18 18"><polygon points="2022,732.5 2038,732.5 2030,747.5" fill="#8f8f8f"/></svg>
<svg style="left:231px;top:765px" width="18" height="18" viewBox="231 765 18 18"><polygon points="247.5,766 247.5,782 232.5,774" fill="#8f8f8f"/></svg>
<div style="left:256px;top:764px;width:1724px;height:20px;background:#424242;border-radius:10px"></div>
<div style="left:256px;top:764px;width:698px;height:20px;background:#757575;border-radius:10px"></div>
<svg style="left:1987px;top:765px" width="18" height="18" viewBox="1987 765 18 18"><polygon points="1988.5,766 1988.5,782 2003.5,774" fill="#8f8f8f"/></svg>
<div style="left:2050px;top:178px;width:2px;height:718px;background:#4f4f4f"></div>
<div style="left:2052px;top:178px;width:503px;height:46px;border:2px solid #858585;border-radius:6px;box-sizing:border-box;background:#212121"></div>
<div class="t u" style="left:2266px;top:187.5px;height:30px;line-height:30px;color:#eeffff;"><span class="c">隐藏</span>FPU</div>
<div style="left:2052px;top:226px;width:468px;height:385px;overflow:hidden"><div style="left:86px;top:8px;width:88px;height:24px;background:#424242"></div><div class="t" style="left:13px;top:8px;height:24px;line-height:24px;color:#b58ef6;">EAX</div><div class="t" style="left:86px;top:8px;height:24px;line-height:24px;color:#eeffff;--bg:#424242;">0019FFCC</div><div style="left:14px;top:28px;width:36px;height:4px;background:#e6e673"></div><div class="t" style="left:13px;top:32px;height:24px;line-height:24px;color:#b58ef6;">EBX</div><div class="t" style="left:86px;top:32px;height:24px;line-height:24px;color:#eeffff;">002ED000</div><div class="t" style="left:13px;top:56px;height:24px;line-height:24px;color:#b58ef6;">ECX</div><div class="t" style="left:86px;top:56px;height:24px;line-height:24px;color:#eeffff;">00453001</div><div class="t" style="left:233px;top:56px;height:24px;line-height:24px;color:#ff5370;">&lt;<span class="c">吾爱破解论坛学习脱壳实例</span>_aspack.EntryPoint&gt;</div><div style="left:14px;top:76px;width:36px;height:4px;background:#e6e673"></div><div class="t" style="left:13px;top:80px;height:24px;line-height:24px;color:#b58ef6;">EDX</div><div class="t" style="left:86px;top:80px;height:24px;line-height:24px;color:#eeffff;">00453001</div><div class="t" style="left:233px;top:80px;height:24px;line-height:24px;color:#ff5370;">&lt;<span class="c">吾爱破解论坛学习脱壳实例</span>_aspack.EntryPoint&gt;</div><div style="left:14px;top:100px;width:36px;height:4px;background:#e6e673"></div><div class="t" style="left:13px;top:104px;height:24px;line-height:24px;color:#b58ef6;">EBP</div><div class="t" style="left:86px;top:104px;height:24px;line-height:24px;color:#eeffff;">0019FF80</div><div class="t" style="left:13px;top:128px;height:24px;line-height:24px;color:#b58ef6;">ESP</div><div class="t" style="left:86px;top:128px;height:24px;line-height:24px;color:#f78c6c;">0019FF74</div><div style="left:14px;top:148px;width:36px;height:4px;background:#ef5350"></div><div class="t" style="left:13px;top:152px;height:24px;line-height:24px;color:#b58ef6;">ESI</div><div class="t" style="left:86px;top:152px;height:24px;line-height:24px;color:#eeffff;">00453001</div><div class="t" style="left:233px;top:152px;height:24px;line-height:24px;color:#ff5370;">&lt;<span class="c">吾爱破解论坛学习脱壳实例</span>_aspack.EntryPoint&gt;</div><div class="t" style="left:13px;top:176px;height:24px;line-height:24px;color:#b58ef6;">EDI</div><div class="t" style="left:86px;top:176px;height:24px;line-height:24px;color:#eeffff;">00453001</div><div class="t" style="left:233px;top:176px;height:24px;line-height:24px;color:#ff5370;">&lt;<span class="c">吾爱破解论坛学习脱壳实例</span>_aspack.EntryPoint&gt;</div><div class="t" style="left:13px;top:224px;height:24px;line-height:24px;color:#b58ef6;">EIP</div><div class="t" style="left:86px;top:224px;height:24px;line-height:24px;color:#f78c6c;">0041DDAC</div><div class="t" style="left:233px;top:224px;height:24px;line-height:24px;color:#ff5370;"><span class="c">吾爱破解论坛学习脱壳实例</span>_aspack.0041DDAC</div><div class="t" style="left:13px;top:272px;height:24px;line-height:24px;color:#b58ef6;">EFLAGS</div><div class="t" style="left:121px;top:272px;height:24px;line-height:24px;color:#eeffff;">00000206</div><div class="t" style="left:13px;top:296px;height:24px;line-height:24px;color:#b58ef6;">ZF</div><div class="t" style="left:49px;top:296px;height:24px;line-height:24px;color:#eeffff;">0</div><div class="t" style="left:85px;top:296px;height:24px;line-height:24px;color:#b58ef6;">PF</div><div class="t" style="left:121px;top:296px;height:24px;line-height:24px;color:#eeffff;">1</div><div class="t" style="left:157px;top:296px;height:24px;line-height:24px;color:#b58ef6;">AF</div><div class="t" style="left:193px;top:296px;height:24px;line-height:24px;color:#eeffff;">0</div><div class="t" style="left:13px;top:320px;height:24px;line-height:24px;color:#b58ef6;">OF</div><div class="t" style="left:49px;top:320px;height:24px;line-height:24px;color:#eeffff;">0</div><div class="t" style="left:85px;top:320px;height:24px;line-height:24px;color:#b58ef6;">SF</div><div class="t" style="left:121px;top:320px;height:24px;line-height:24px;color:#eeffff;">0</div><div class="t" style="left:157px;top:320px;height:24px;line-height:24px;color:#b58ef6;">DF</div><div class="t" style="left:193px;top:320px;height:24px;line-height:24px;color:#eeffff;">0</div><div class="t" style="left:13px;top:344px;height:24px;line-height:24px;color:#b58ef6;">CF</div><div class="t" style="left:49px;top:344px;height:24px;line-height:24px;color:#eeffff;">0</div><div class="t" style="left:85px;top:344px;height:24px;line-height:24px;color:#b58ef6;">TF</div><div class="t" style="left:121px;top:344px;height:24px;line-height:24px;color:#eeffff;">0</div><div class="t" style="left:157px;top:344px;height:24px;line-height:24px;color:#b58ef6;">IF</div><div class="t" style="left:193px;top:344px;height:24px;line-height:24px;color:#eeffff;">1</div></div>
<svg style="left:2528px;top:232px" width="18" height="18" viewBox="2528 232 18 18"><polygon points="2529,248.5 2545,248.5 2537,233.5" fill="#8f8f8f"/></svg>
<div style="left:2527px;top:256px;width:20px;height:324px;background:#424242;border-radius:10px"></div>
<div style="left:2527px;top:256px;width:20px;height:62px;background:#757575;border-radius:10px"></div>
<svg style="left:2528px;top:584px" width="18" height="18" viewBox="2528 584 18 18"><polygon points="2529,585.5 2545,585.5 2537,600.5" fill="#8f8f8f"/></svg>
<svg style="left:2059px;top:618px" width="18" height="18" viewBox="2059 618 18 18"><polygon points="2075.5,619 2075.5,635 2060.5,627" fill="#8f8f8f"/></svg>
<div style="left:2083px;top:617px;width:405px;height:20px;background:#424242;border-radius:10px"></div>
<div style="left:2083px;top:617px;width:95px;height:20px;background:#757575;border-radius:10px"></div>
<svg style="left:2494px;top:618px" width="18" height="18" viewBox="2494 618 18 18"><polygon points="2495.5,619 2495.5,635 2510.5,627" fill="#8f8f8f"/></svg>
<div style="left:2052px;top:646px;width:505px;height:2px;background:#4f4f4f"></div>
<div style="left:2053px;top:649px;width:190px;height:53px;border:2px solid #3a3a3a;border-radius:5px;box-sizing:border-box;background:#212121"></div>
<div style="left:2064px;top:660px;width:133px;height:34px;overflow:hidden"><div class="t u" style="left:0px;top:2px;height:30px;line-height:30px;color:#eeffff;"><span class="c">默认</span> (stdcall)</div></div>
<svg style="left:2217px;top:670px" width="16" height="12" viewBox="2217 670 16 12"><polygon points="2218,672.5 2232,672.5 2225,680" fill="#8a8a8a"/></svg>
<div style="left:2248px;top:650px;width:170px;height:51px;background:#323232;border-radius:5px"></div>
<svg style="left:2257px;top:670px" width="16" height="12" viewBox="2257 670 16 12"><polygon points="2258,672.5 2272,672.5 2265,680" fill="#8a8a8a"/></svg>
<div class="t u" style="left:2292px;top:663.5px;height:30px;line-height:30px;color:#eeffff;--bg:#323232;">5</div>
<svg style="left:2394px;top:670px" width="16" height="12" viewBox="2394 670 16 12"><polygon points="2395,679.5 2409,679.5 2402,672" fill="#8a8a8a"/></svg>
<div style="left:2426px;top:658px;width:32px;height:32px;border:2px solid #5a5a5a;border-radius:5px;box-sizing:border-box;background:#212121"></div>
<div class="t u" style="left:2470px;top:660px;height:30px;line-height:30px;color:#eeffff;"><span class="c">解锁</span></div>
<div style="left:2054px;top:707px;width:464px;height:21px;background:#424242"></div>
<div style="left:2054px;top:707px;width:464px;height:120px;overflow:hidden"><div class="t" style="left:8px;top:-1px;height:22px;line-height:22px;color:#eeffff;--bg:#424242;">1: [esp] 747E0419 kernel32.747E0419</div><div class="t" style="left:8px;top:21px;height:22px;line-height:22px;color:#eeffff;">2: [esp+4] 002ED000 002ED000</div><div class="t" style="left:8px;top:43px;height:22px;line-height:22px;color:#eeffff;">3: [esp+8] 747E0400 &lt;kernel32.BaseThreadInitThunk&gt; (747E0400)</div><div class="t" style="left:8px;top:65px;height:22px;line-height:22px;color:#eeffff;">4: [esp+C] 0019FFDC 0019FFDC</div><div class="t" style="left:8px;top:87px;height:22px;line-height:22px;color:#eeffff;">5: [esp+10] 771874ED ntdll.771874ED</div></div>
<svg style="left:2526px;top:713px" width="18" height="18" viewBox="2526 713 18 18"><polygon points="2527,729.5 2543,729.5 2535,714.5" fill="#8f8f8f"/></svg>
<div style="left:2525px;top:738px;width:20px;height:124px;background:#424242;border-radius:10px"></div>
<div style="left:2525px;top:738px;width:20px;height:124px;background:#757575;border-radius:10px"></div>
<svg style="left:2526px;top:869px" width="18" height="18" viewBox="2526 869 18 18"><polygon points="2527,870.5 2543,870.5 2535,885.5" fill="#8f8f8f"/></svg>
<div style="left:0px;top:794px;width:2050px;height:2px;background:#555"></div>
<div class="t" style="left:12px;top:798px;height:22px;line-height:22px;color:#eeffff;"><span class="c">吾爱破解论坛学习脱壳实例</span>_aspack.00422CA0</div>
<div class="t" style="left:12px;top:865px;height:22px;line-height:22px;color:#eeffff;">.text:0041DDAC <span class="c">吾爱破解论坛学习脱壳实例</span>_aspack.exe:$1DDAC #0</div>
<div style="left:0px;top:895px;width:2557px;height:2px;background:#4f4f4f"></div>
<div style="left:4px;top:900px;width:162px;height:44px;background:#424242;border-radius:5px 5px 0 0"></div>
<div style="left:4px;top:940px;width:162px;height:4px;background:#8c9eff"></div>
<svg style="left:24px;top:910px" width="24" height="20" viewBox="0 0 24 20"><rect x="3" y="1" width="20" height="15" fill="#bdbdbd"/><rect x="7" y="1" width="2" height="15" fill="#e8e8e8"/><rect x="12" y="1" width="2" height="15" fill="#e0e0e0"/><rect x="17" y="1" width="2" height="15" fill="#d8d8d8"/><rect x="0.500" y="3" width="5" height="10" fill="#e0b020" stroke="#8a6a10"/><rect x="2" y="5" width="2" height="3" fill="#3a7ad0"/><rect x="2" y="16" width="22" height="2.500" fill="#4a4a4a"/><rect x="4" y="17" width="4" height="2.500" fill="#2a2a2a"/><rect x="17" y="17" width="4" height="2.500" fill="#2a2a2a"/></svg>
<div class="t u" style="left:68px;top:906.7px;height:30px;line-height:30px;color:#8c9eff;--bg:#424242;"><span class="c">内存</span> 1</div>
<div style="left:170px;top:900px;width:162px;height:42px;background:#323232;border-radius:5px 5px 0 0"></div>
<svg style="left:190px;top:910px" width="24" height="20" viewBox="0 0 24 20"><rect x="3" y="1" width="20" height="15" fill="#bdbdbd"/><rect x="7" y="1" width="2" height="15" fill="#e8e8e8"/><rect x="12" y="1" width="2" height="15" fill="#e0e0e0"/><rect x="17" y="1" width="2" height="15" fill="#d8d8d8"/><rect x="0.500" y="3" width="5" height="10" fill="#e0b020" stroke="#8a6a10"/><rect x="2" y="5" width="2" height="3" fill="#3a7ad0"/><rect x="2" y="16" width="22" height="2.500" fill="#4a4a4a"/><rect x="4" y="17" width="4" height="2.500" fill="#2a2a2a"/><rect x="17" y="17" width="4" height="2.500" fill="#2a2a2a"/></svg>
<div class="t u" style="left:234px;top:906.7px;height:30px;line-height:30px;color:#eeffff;--bg:#323232;"><span class="c">内存</span> 2</div>
<div style="left:336px;top:900px;width:162px;height:42px;background:#323232;border-radius:5px 5px 0 0"></div>
<svg style="left:356px;top:910px" width="24" height="20" viewBox="0 0 24 20"><rect x="3" y="1" width="20" height="15" fill="#bdbdbd"/><rect x="7" y="1" width="2" height="15" fill="#e8e8e8"/><rect x="12" y="1" width="2" height="15" fill="#e0e0e0"/><rect x="17" y="1" width="2" height="15" fill="#d8d8d8"/><rect x="0.500" y="3" width="5" height="10" fill="#e0b020" stroke="#8a6a10"/><rect x="2" y="5" width="2" height="3" fill="#3a7ad0"/><rect x="2" y="16" width="22" height="2.500" fill="#4a4a4a"/><rect x="4" y="17" width="4" height="2.500" fill="#2a2a2a"/><rect x="17" y="17" width="4" height="2.500" fill="#2a2a2a"/></svg>
<div class="t u" style="left:400px;top:906.7px;height:30px;line-height:30px;color:#eeffff;--bg:#323232;"><span class="c">内存</span> 3</div>
<div style="left:502px;top:900px;width:162px;height:42px;background:#323232;border-radius:5px 5px 0 0"></div>
<svg style="left:522px;top:910px" width="24" height="20" viewBox="0 0 24 20"><rect x="3" y="1" width="20" height="15" fill="#bdbdbd"/><rect x="7" y="1" width="2" height="15" fill="#e8e8e8"/><rect x="12" y="1" width="2" height="15" fill="#e0e0e0"/><rect x="17" y="1" width="2" height="15" fill="#d8d8d8"/><rect x="0.500" y="3" width="5" height="10" fill="#e0b020" stroke="#8a6a10"/><rect x="2" y="5" width="2" height="3" fill="#3a7ad0"/><rect x="2" y="16" width="22" height="2.500" fill="#4a4a4a"/><rect x="4" y="17" width="4" height="2.500" fill="#2a2a2a"/><rect x="17" y="17" width="4" height="2.500" fill="#2a2a2a"/></svg>
<div class="t u" style="left:566px;top:906.7px;height:30px;line-height:30px;color:#eeffff;--bg:#323232;"><span class="c">内存</span> 4</div>
<div style="left:668px;top:900px;width:162px;height:42px;background:#323232;border-radius:5px 5px 0 0"></div>
<svg style="left:688px;top:910px" width="24" height="20" viewBox="0 0 24 20"><rect x="3" y="1" width="20" height="15" fill="#bdbdbd"/><rect x="7" y="1" width="2" height="15" fill="#e8e8e8"/><rect x="12" y="1" width="2" height="15" fill="#e0e0e0"/><rect x="17" y="1" width="2" height="15" fill="#d8d8d8"/><rect x="0.500" y="3" width="5" height="10" fill="#e0b020" stroke="#8a6a10"/><rect x="2" y="5" width="2" height="3" fill="#3a7ad0"/><rect x="2" y="16" width="22" height="2.500" fill="#4a4a4a"/><rect x="4" y="17" width="4" height="2.500" fill="#2a2a2a"/><rect x="17" y="17" width="4" height="2.500" fill="#2a2a2a"/></svg>
<div class="t u" style="left:732px;top:906.7px;height:30px;line-height:30px;color:#eeffff;--bg:#323232;"><span class="c">内存</span> 5</div>
<div style="left:834px;top:900px;width:162px;height:42px;background:#323232;border-radius:5px 5px 0 0"></div>
<svg style="left:854px;top:908px" width="24" height="24" viewBox="0 0 24 24"><path d="M2 3 L8 6 H16 L22 3 L21 13 C21 19 17 22 12 22 C7 22 3 19 3 13 Z" fill="#e0a050"/><path d="M7 13 C7 18 17 18 17 13 L14 20 H10 Z" fill="#f4e0c0"/><circle cx="8.500" cy="12" r="1.300" fill="#3a2a1a"/><circle cx="15.500" cy="12" r="1.300" fill="#3a2a1a"/><rect x="11" y="15" width="2" height="2" fill="#3a2a1a"/></svg>
<div class="t u" style="left:898px;top:906.7px;height:30px;line-height:30px;color:#eeffff;--bg:#323232;"><span class="c">监视</span> 1</div>
<div style="left:1000px;top:900px;width:184px;height:42px;background:#323232;border-radius:5px 5px 0 0"></div>
<svg style="left:1019px;top:912px" width="26" height="16" viewBox="0 0 26 16"><rect x="1" y="1" width="1.600" height="14" fill="#0a0a0a"/><rect x="23" y="1" width="1.600" height="14" fill="#0a0a0a"/><path d="M5 4 L11 12 M11 4 L5 12" stroke="#7a0a10" stroke-width="1.800"/><rect x="13" y="6" width="7" height="1.600" fill="#151515"/><rect x="13" y="9.500" width="7" height="1.600" fill="#151515"/></svg>
<div class="t u" style="left:1064px;top:906.7px;height:30px;line-height:30px;color:#eeffff;--bg:#323232;"><span class="c">局部变量</span></div>
<div style="left:1188px;top:900px;width:162px;height:42px;background:#323232;border-radius:5px 5px 0 0"></div>
<svg style="left:1207px;top:909px" width="26" height="22" viewBox="0 0 26 22"><circle cx="4.500" cy="5" r="3.500" fill="#5a78e8"/><path d="M8 5 H14 V17 H18 M14 5 H18" fill="none" stroke="#3a3a3a" stroke-width="1.200"/><rect x="17" y="2" width="5.500" height="5.500" fill="#d0d0d0"/><rect x="17" y="13.500" width="5.500" height="5.500" fill="#d0d0d0"/></svg>
<div class="t u" style="left:1252px;top:906.7px;height:30px;line-height:30px;color:#eeffff;--bg:#323232;"><span class="c">结构体</span></div>
<div style="left:6px;top:948px;width:1350px;height:27px;background:#424242"></div>
<div style="left:6px;top:975px;width:1350px;height:3px;background:#757575"></div>
<div style="left:114px;top:948px;width:3px;height:30px;background:#757575"></div>
<div style="left:898px;top:948px;width:3px;height:30px;background:#757575"></div>
<div style="left:1353px;top:948px;width:3px;height:30px;background:#757575"></div>
<div style="left:115.5px;top:978px;width:1.5px;height:217px;background:#8a8a8a"></div>
<div style="left:899.5px;top:978px;width:1.5px;height:217px;background:#8a8a8a"></div>
<div style="left:1354.5px;top:978px;width:1.5px;height:217px;background:#8a8a8a"></div>
<div class="t" style="left:14px;top:949.3px;height:26px;line-height:26px;color:#eeffff;--bg:#424242;"><span class="c">地址</span></div>
<div class="t" style="left:125px;top:950.3px;height:26px;line-height:26px;color:#eeffff;--bg:#424242;">UNICODE</div>
<div style="left:126px;top:979px;width:12px;height:21px;background:#424242"></div>
<div class="t" style="left:14px;top:978px;height:22px;line-height:22px;color:#a0a0a0;">77121000</div>
<div class="t" style="left:125px;top:978px;height:22px;line-height:22px;color:#eeffff;"><span class="dd">................................</span><span class="d">"$</span><span class="dd">..</span><span class="d">*,</span><span class="dd">..........................</span></div>
<div class="t" style="left:14px;top:1000px;height:22px;line-height:22px;color:#a0a0a0;">77121080</div>
<div class="t" style="left:125px;top:1000px;height:22px;line-height:22px;color:#eeffff;"><span class="dd">................................................................</span></div>
<div class="t" style="left:14px;top:1022px;height:22px;line-height:22px;color:#a0a0a0;">77121100</div>
<div class="t" style="left:125px;top:1022px;height:22px;line-height:22px;color:#eeffff;"><span class="dd">....................................................</span><span class="d">(*</span><span class="dd">..</span><span class="d">46</span><span class="dd">...</span><span class="k" style="width:12px"></span><span class="dd">..</span></div>
<div class="t" style="left:14px;top:1044px;height:22px;line-height:22px;color:#a0a0a0;">77121180</div>
<div class="t" style="left:125px;top:1044px;height:22px;line-height:22px;color:#eeffff;"><span class="dd">........</span><span class="k" style="width:12px"></span><span class="d">"</span><span class="dd">..</span><span class="d">02</span><span class="dd">..</span><span class="d">,</span><span class="dd">...</span><span class="k" style="width:12px"></span><span class="d">"</span><span class="dd">..........</span><span class="d">68</span><span class="dd">..</span><span class="k" style="width:12px"></span><span class="d">"</span><span class="dd">..........................</span></div>
<div class="t" style="left:14px;top:1066px;height:22px;line-height:22px;color:#a0a0a0;">77121200</div>
<div class="t" style="left:125px;top:1066px;height:22px;line-height:22px;color:#eeffff;"><span class="dd">................................................................</span></div>
<div class="t" style="left:14px;top:1088px;height:22px;line-height:22px;color:#a0a0a0;">77121280</div>
<div class="t" style="left:125px;top:1088px;height:22px;line-height:22px;color:#eeffff;"><span class="dd">................................................................</span></div>
<div class="t" style="left:14px;top:1110px;height:22px;line-height:22px;color:#a0a0a0;">77121300</div>
<div class="t" style="left:125px;top:1110px;height:22px;line-height:22px;color:#eeffff;"><span class="dd">................................................................</span></div>
<div class="t" style="left:14px;top:1132px;height:22px;line-height:22px;color:#a0a0a0;">77121380</div>
<div class="t" style="left:125px;top:1132px;height:22px;line-height:22px;color:#eeffff;"><span class="dd">........</span><span class="d">¶</span><span class="k" style="width:16px"><span class="c">、</span></span><span class="dd">..........................</span><span class="d">¶</span><span class="k" style="width:16px"><span class="c">、</span></span><span class="dd">..</span><span class="d">$&amp;</span><span class="dd">........</span><span class="d">@</span><span class="dd">...........</span><span class="d">@</span><span class="dd">.</span></div>
<div class="t" style="left:14px;top:1154px;height:22px;line-height:22px;color:#a0a0a0;">77121400</div>
<div class="t" style="left:125px;top:1154px;height:22px;line-height:22px;color:#eeffff;"><span class="dd">................</span><span class="d">@</span><span class="dd">...........................</span><span class="d">@</span><span class="dd">...........</span><span class="d">@</span><span class="dd">.....</span><span class="d">&gt;@</span></div>
<div class="t" style="left:14px;top:1176px;height:22px;line-height:22px;color:#a0a0a0;">77121480</div>
<div class="t" style="left:125px;top:1176px;height:22px;line-height:22px;color:#eeffff;"><span class="dd">..</span><span class="d">$&amp;</span><span class="dd">............................................................</span></div>
<svg style="left:1365px;top:955px" width="18" height="18" viewBox="1365 955 18 18"><polygon points="1366,971.5 1382,971.5 1374,956.5" fill="#8f8f8f"/></svg>
<div style="left:1364px;top:980px;width:20px;height:184px;background:#424242;border-radius:10px"></div>
<div style="left:1364px;top:980px;width:20px;height:48px;background:#757575;border-radius:10px"></div>
<svg style="left:1365px;top:1171px" width="18" height="18" viewBox="1365 1171 18 18"><polygon points="1366,1172.5 1382,1172.5 1374,1187.5" fill="#8f8f8f"/></svg>
<div style="left:1396px;top:898px;width:2px;height:313px;background:#555"></div>
<div style="left:1400px;top:900px;width:1117px;height:22px;background:#424242"></div>
<div style="left:1511px;top:900px;width:1.5px;height:262px;background:#7a7a7a"></div>
<div style="left:1631px;top:900px;width:1.5px;height:262px;background:#7a7a7a"></div>
<div class="t" style="left:1408px;top:900px;height:22px;line-height:22px;color:#a2f24e;--bg:#424242;">0019FF74</div>
<div class="t" style="left:1522px;top:900px;height:22px;line-height:22px;color:#eeffff;--bg:#424242;">747E0419</div>
<div class="t" style="left:1642px;top:900px;height:22px;line-height:22px;color:#ff5370;--bg:#424242;"><span class="c">返回到</span> kernel32.BaseThreadInitThunk+19 <span class="c">自</span> ???</div>
<div class="t" style="left:1408px;top:922px;height:22px;line-height:22px;color:#a0a0a0;">0019FF78</div>
<div class="t" style="left:1522px;top:922px;height:22px;line-height:22px;color:#eeffff;">002ED000</div>
<div class="t" style="left:1408px;top:944px;height:22px;line-height:22px;color:#b58ef6;">0019FF7C</div>
<div class="t" style="left:1522px;top:944px;height:22px;line-height:22px;color:#eeffff;">747E0400</div>
<div class="t" style="left:1642px;top:944px;height:22px;line-height:22px;color:#eeffff;">kernel32.BaseThreadInitThunk</div>
<div class="t" style="left:1408px;top:966px;height:22px;line-height:22px;color:#a0a0a0;">0019FF80</div>
<div class="t" style="left:1522px;top:966px;height:22px;line-height:22px;color:#eeffff;">0019FFDC</div>
<div class="t" style="left:1408px;top:988px;height:22px;line-height:22px;color:#a0a0a0;">0019FF84</div>
<div class="t" style="left:1528px;top:988px;height:22px;line-height:22px;color:#eeffff;">771874ED</div>
<div class="t" style="left:1642px;top:988px;height:22px;line-height:22px;color:#ff5370;"><span class="c">返回到</span> ntdll.RtlGetAppContainerNamedObjectPath+ED <span class="c">自</span> ???</div>
<div class="t" style="left:1408px;top:1010px;height:22px;line-height:22px;color:#a0a0a0;">0019FF88</div>
<div class="t" style="left:1528px;top:1010px;height:22px;line-height:22px;color:#eeffff;">002ED000</div>
<div class="t" style="left:1408px;top:1032px;height:22px;line-height:22px;color:#a0a0a0;">0019FF8C</div>
<div class="t" style="left:1528px;top:1032px;height:22px;line-height:22px;color:#eeffff;">7ED6414A</div>
<div class="t" style="left:1408px;top:1054px;height:22px;line-height:22px;color:#a0a0a0;">0019FF90</div>
<div class="t" style="left:1528px;top:1054px;height:22px;line-height:22px;color:#eeffff;">00000000</div>
<div class="t" style="left:1408px;top:1076px;height:22px;line-height:22px;color:#a0a0a0;">0019FF94</div>
<div class="t" style="left:1528px;top:1076px;height:22px;line-height:22px;color:#eeffff;">00000000</div>
<div class="t" style="left:1408px;top:1098px;height:22px;line-height:22px;color:#a0a0a0;">0019FF98</div>
<div class="t" style="left:1528px;top:1098px;height:22px;line-height:22px;color:#eeffff;">002ED000</div>
<div class="t" style="left:1408px;top:1120px;height:22px;line-height:22px;color:#a0a0a0;">0019FF9C</div>
<div class="t" style="left:1528px;top:1120px;height:22px;line-height:22px;color:#eeffff;">00000000</div>
<div class="t" style="left:1408px;top:1142px;height:22px;line-height:22px;color:#a0a0a0;">0019FFA0</div>
<div class="t" style="left:1528px;top:1142px;height:22px;line-height:22px;color:#eeffff;">00000000</div>
<svg style="left:1507px;top:950px" width="8" height="12" viewBox="0 0 8 12"><path d="M6.500 1.500 L1.500 6 L6.500 10.500" fill="none" stroke="#7a6ab8" stroke-width="1.400"/></svg>
<div style="left:1516px;top:990px;width:4px;height:172px;background:#ff8a80"></div>
<div style="left:1516px;top:990px;width:10px;height:3px;background:#ff8a80"></div>
<svg style="left:2526px;top:907px" width="18" height="18" viewBox="2526 907 18 18"><polygon points="2527,923.5 2543,923.5 2535,908.5" fill="#8f8f8f"/></svg>
<div style="left:2525px;top:932px;width:20px;height:200px;background:#424242;border-radius:10px"></div>
<div style="left:2525px;top:1082px;width:20px;height:48px;background:#757575;border-radius:10px"></div>
<svg style="left:2526px;top:1137px" width="18" height="18" viewBox="2526 1137 18 18"><polygon points="2527,1138.5 2543,1138.5 2535,1153.5" fill="#8f8f8f"/></svg>
<svg style="left:1407px;top:1171px" width="18" height="18" viewBox="1407 1171 18 18"><polygon points="1423.5,1172 1423.5,1188 1408.5,1180" fill="#8f8f8f"/></svg>
<div style="left:1432px;top:1170px;width:1055px;height:20px;background:#424242;border-radius:10px"></div>
<div style="left:1432px;top:1170px;width:262px;height:20px;background:#757575;border-radius:10px"></div>
<svg style="left:2492px;top:1171px" width="18" height="18" viewBox="2492 1171 18 18"><polygon points="2493.5,1172 2493.5,1188 2508.5,1180" fill="#8f8f8f"/></svg>
<div class="t u" style="left:1px;top:1215.3px;height:30px;line-height:30px;color:#eeffff;"><span class="c">命令</span>:</div>
<div style="left:68px;top:1212px;width:2280px;height:36px;background:#323232;border-radius:3px"></div>
<div class="t u" style="left:75px;top:1216.5px;height:30px;line-height:30px;color:#757575;--bg:#323232;"><span class="c">命令使用逗号分隔（像汇编语言）：</span>mov eax, ebx</div>
<div style="left:2350px;top:1202px;width:208px;height:56px;border:2px solid #3c3c3c;border-radius:5px;box-sizing:border-box;background:#212121"></div>
<div class="t u" style="left:2362px;top:1215px;height:30px;line-height:30px;color:#eeffff;"><span class="c">默认</span></div>
<svg style="left:2532px;top:1224px" width="16" height="12" viewBox="2532 1224 16 12"><polygon points="2533,1226.5 2547,1226.5 2540,1234" fill="#8a8a8a"/></svg>
<div class="t u" style="left:26px;top:1262.7px;height:30px;line-height:30px;color:#8c8c28;"><span class="c">已暂停</span></div>
<div class="t u" style="left:125.5px;top:1260.8px;height:30px;line-height:30px;color:#eeffff;"><span class="c">吾爱破解论坛学习脱壳实例</span>_aspack.exe: <span style="color:#82aaff;background:linear-gradient(#82aaff,#82aaff) 0 calc(100% - 3.5px)/100% 1.5px no-repeat">0041DDAC</span> -&gt; <span style="color:#82aaff;background:linear-gradient(#82aaff,#82aaff) 0 calc(100% - 3.5px)/100% 1.5px no-repeat">0041DDB0</span> (0x<span style="color:#82aaff;background:linear-gradient(#82aaff,#82aaff) 0 calc(100% - 3.5px)/100% 1.5px no-repeat">00000005</span> bytes)</div>
<div class="t u" style="left:2305px;top:1266.5px;height:30px;line-height:30px;color:#eeffff;"><span class="c">已调试时间：</span> 0:01:58:26</div>
</body></html>
